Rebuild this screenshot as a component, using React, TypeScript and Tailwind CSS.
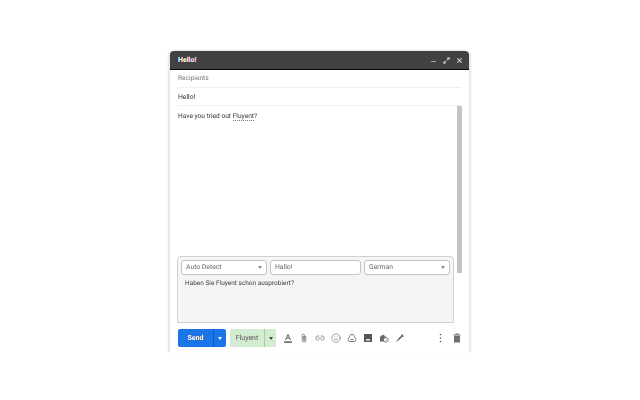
import { Minus, Smile, Link2 } from "lucide-react";

function Caret({ className }: { className: string }) {
  return <span className={`w-0 h-0 border-x-[2px] border-x-transparent border-t-[3px] ${className}`} />;
}

function LangSelect({ label, width }: { label: string; width: string }) {
  return (
    <div className={`${width} h-[15px] bg-white border border-[#c4c4c4] rounded-[3px] flex items-center justify-between pl-[4px] pr-[4px] text-[6.8px] text-[#666]`}>
      <span>{label}</span>
      <Caret className="border-t-[#888]" />
    </div>
  );
}

export default function App() {
  return (
    <div className="w-[640px] h-[400px] bg-white overflow-hidden pt-[51px] pl-[170px] font-['Roboto','Liberation_Sans',sans-serif] [text-rendering:geometricPrecision]">
      <div className="w-[299px] h-[302px] bg-white opacity-[0.995] rounded-t-[4px] shadow-[-3px_0_2px_-1px_#e4e4e4,3px_0_2px_-1px_#e4e4e4,0_-2px_2px_-1px_#e8e8e8] flex flex-col">
        {/* header */}
        <div className="h-[19px] shrink-0 bg-[#404040] rounded-t-[4px] border-b border-black flex items-center justify-between pl-[8px] pr-[6px]">
          <span className="text-[7px] font-bold text-white">Hello!</span>
          <div className="flex items-center gap-[6px] text-[#c8c8c8]">
            <Minus size={7} strokeWidth={2.5} className="mt-[3px]" />
            <svg width="7" height="7" viewBox="0 0 8 8" fill="none" stroke="currentColor" strokeWidth="1.2">
              <path d="M5 1h2v2M7 1L4.5 3.5M3 7H1V5M1 7l2.5-2.5" />
            </svg>
            <svg width="7" height="7" viewBox="0 0 8 8" fill="none" stroke="currentColor" strokeWidth="1.4">
              <path d="M1.5 1.5l5 5M6.5 1.5l-5 5" />
            </svg>
          </div>
        </div>

        <div className="flex-1 min-h-0 px-[8px] flex flex-col">
          <div className="h-[18px] shrink-0 border-b border-[#efefef] flex items-center pt-[1px] text-[6.6px] text-[#777]">Recipients</div>
          <div className="h-[18px] shrink-0 border-b border-[#efefef] flex items-center pt-[1px] text-[6.8px] text-[#333]">Hello!</div>

          {/* body */}
          <div className="relative flex-1 min-h-0 pt-[5px]">
            <p className="text-[6.6px] leading-[10px] text-[#333]">
              Have you tried out{" "}
              <span className="border-b border-dotted border-[#e0483e]">Fluyent</span>?
            </p>
            <div className="absolute right-[-1px] top-0 w-[5px] h-[167px] bg-[#c4c4c4]" />
            <div className="absolute left-[-1px] right-[7px] bottom-0 h-[67px] bg-[#f5f5f5] border border-[#d0d0d0] rounded-t-[4px] pl-[3px] pt-[3px] grayscale">
              <div className="flex gap-[3px]">
                <LangSelect label="Auto Detect" width="w-[86px]" />
                <div className="w-[91px] h-[15px] bg-white border border-[#c4c4c4] rounded-[3px] flex items-center pl-[4px] text-[6.8px] text-[#666]">Hallo!</div>
                <LangSelect label="German" width="w-[86px]" />
              </div>
              <p className="mt-[3px] pl-[4px] text-[6.5px] leading-[10px] text-[#2f3b55]">Haben Sie Fluyent schon ausprobiert?</p>
            </div>
          </div>

          {/* toolbar */}
          <div className="h-[30px] shrink-0 flex items-center text-[#666]">
            <div className="w-[48px] h-[18px] bg-[#1a73e8] rounded-[2px] flex text-white text-[7px] font-bold">
              <span className="flex-1 flex items-center justify-center border-r border-[#1559b8]">Send</span>
              <span className="w-[12px] flex items-center justify-center"><Caret className="border-t-white" /></span>
            </div>
            <div className="ml-[4px] w-[46px] h-[18px] bg-[#d3ebd0] rounded-[2px] flex text-[#555] text-[7px]">
              <span className="flex-1 flex items-center justify-center border-r border-[#a9cda6]">Fluyent</span>
              <span className="w-[11px] flex items-center justify-center"><Caret className="border-t-[#444]" /></span>
            </div>
            <div className="ml-[7px] flex items-center gap-[6px]">
              {/* text color */}
              <svg width="10" height="10" viewBox="0 0 10 10" fill="none">
                <path d="M2.5 7L5 1.5 7.5 7M3.4 5h3.2" stroke="#555" strokeWidth="0.9" />
                <path d="M1 9h8" stroke="#111" strokeWidth="1" />
              </svg>
              {/* attach */}
              <svg width="10" height="10" viewBox="0 0 10 10" fill="none" stroke="#777" strokeWidth="0.9">
                <path d="M6.8 3v4.2a1.8 1.8 0 0 1-3.6 0V2.4a1.2 1.2 0 0 1 2.4 0v4.4a.5.5 0 0 1-1 0V3" />
              </svg>
              <Link2 size={10} strokeWidth={1.8} className="text-[#777]" />
              <Smile size={10} strokeWidth={1.5} className="text-[#666]" />
              {/* drive */}
              <svg width="10" height="10" viewBox="0 0 10 10" fill="none" stroke="#666" strokeWidth="0.8">
                <path d="M3.8 1.5h2.4L9 6.5 8 8.5H2L1 6.5zM3.3 6.5h3.4" strokeLinejoin="round" />
              </svg>
              {/* photo */}
              <svg width="10" height="10" viewBox="0 0 10 10">
                <rect x="1" y="1" width="8" height="8" rx="0.5" fill="#555" />
                <path d="M2.5 7.5L4 5.5l1 1.2L6 5.5l1.5 2z" fill="#fff" />
              </svg>
              {/* confidential */}
              <svg width="10" height="10" viewBox="0 0 10 10">
                <path d="M1 3.5h1.2a1.8 1.8 0 0 1 3.6 0H7v5H1z" fill="#666" />
                <circle cx="6.8" cy="6.8" r="2.4" fill="#fff" stroke="#666" strokeWidth="0.8" />
                <path d="M6.8 5.6v1.3l.8.4" stroke="#666" strokeWidth="0.5" fill="none" />
              </svg>
              {/* signature */}
              <svg width="10" height="10" viewBox="0 0 10 10">
                <path d="M6.8 1l2.2 2.2-.9.9-.5-.5L4 7.2 2.8 6l3.6-3.6-.3-.4zM2.4 6.4l1.2 1.2L1.4 9z" fill="#666" />
              </svg>
            </div>
            <svg width="3" height="10" viewBox="0 0 3 10" className="ml-auto mr-[11px]">
              <circle cx="1.5" cy="1.5" r="0.8" fill="#555" />
              <circle cx="1.5" cy="5" r="0.8" fill="#555" />
              <circle cx="1.5" cy="8.5" r="0.8" fill="#555" />
            </svg>
            <svg width="8" height="10" viewBox="0 0 8 10">
              <rect x="2.5" y="0.5" width="3" height="1" fill="#666" />
              <rect x="0.5" y="1.5" width="7" height="1" fill="#666" />
              <rect x="1" y="3" width="6" height="6.5" fill="#6f6f6f" />
            </svg>
          </div>
        </div>
      </div>
    </div>
  );
}
